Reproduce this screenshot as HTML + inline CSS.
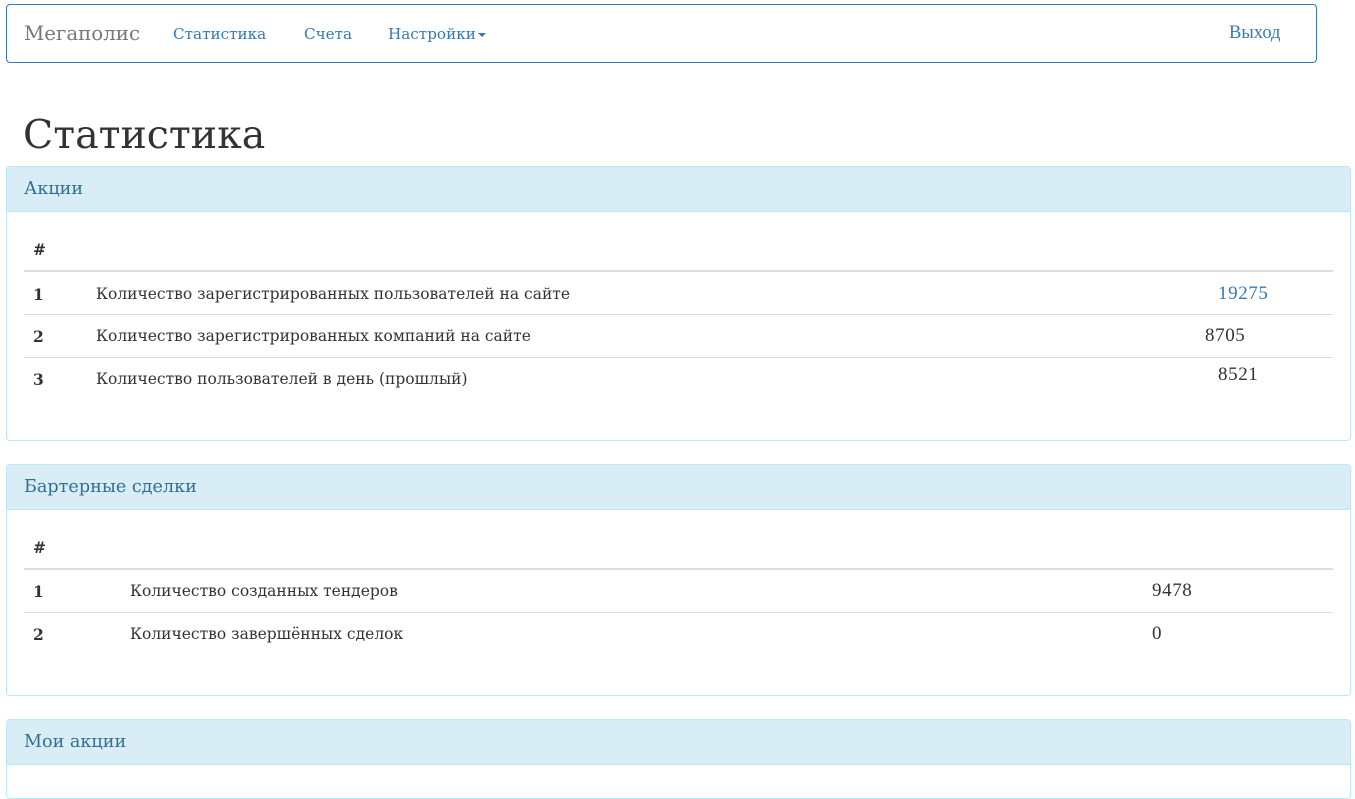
<!DOCTYPE html>
<html><head><meta charset="utf-8"><style>
*{box-sizing:border-box;margin:0;padding:0}
body{width:1355px;height:765px;overflow:hidden;background:#fff;font-family:"DejaVu Serif",serif;color:#333;position:relative}
.a{position:absolute;white-space:nowrap}
.nav{position:absolute;left:6px;top:4px;width:1311px;height:59px;border:1px solid #337ab7;border-radius:4px}
.lk{color:#337ab7;font-size:15.2px}
.panel{position:absolute;left:6px;width:1345px;border:1px solid #bce8f1;border-radius:4px;overflow:hidden}
.ph{height:45px;background:#d9edf7;border-bottom:1px solid #bce8f1;color:#31708f;font-size:17.6px;padding:12px 17px}
.ln{position:absolute;left:24px;width:1309px;height:1px;background:#ddd}
.b{font-weight:bold;font-size:15.5px}
.t{font-size:15.5px}
.n{font-family:"Liberation Serif",serif;font-size:19px;letter-spacing:0.6px}
</style></head><body>
<div class="nav"></div>
<div class="a" style="left:24px;top:22px;color:#777;font-size:19.8px">Мегаполис</div>
<div class="a lk" style="left:173px;top:25px">Статистика</div>
<div class="a lk" style="left:304px;top:25px">Счета</div>
<div class="a lk" style="left:388px;top:25px">Настройки<span style="display:inline-block;width:0;height:0;border-left:4px solid transparent;border-right:4px solid transparent;border-top:4px solid #337ab7;vertical-align:middle;margin-left:2px"></span></div>
<div class="a" style="left:1229px;top:23px;color:#337ab7;font-family:'Liberation Serif',serif;font-size:18.5px">Выход</div>
<div class="a" style="left:23px;top:112px;font-size:39.5px;color:#333">Статистика</div>

<div class="panel" style="top:166px;height:275px"><div class="ph">Акции</div></div>
<div class="a b" style="left:33px;top:240px">#</div>
<div class="ln" style="top:270px;height:2px"></div>
<div class="a b" style="left:33px;top:285px">1</div>
<div class="a t" style="left:96px;top:285px">Количество зарегистрированных пользователей на сайте</div>
<div class="a n" style="left:1218px;top:283px;color:#337ab7">19275</div>
<div class="ln" style="top:314px"></div>
<div class="a b" style="left:33px;top:327px">2</div>
<div class="a t" style="left:96px;top:327px">Количество зарегистрированных компаний на сайте</div>
<div class="a n" style="left:1205px;top:325px">8705</div>
<div class="ln" style="top:357px"></div>
<div class="a b" style="left:33px;top:370px">3</div>
<div class="a t" style="left:96px;top:370px">Количество пользователей в день (прошлый)</div>
<div class="a n" style="left:1218px;top:364px">8521</div>

<div class="panel" style="top:464px;height:232px"><div class="ph" style="height:45px">Бартерные сделки</div></div>
<div class="a b" style="left:33px;top:538px">#</div>
<div class="ln" style="top:568px;height:2px"></div>
<div class="a b" style="left:33px;top:582px">1</div>
<div class="a t" style="left:130px;top:582px">Количество созданных тендеров</div>
<div class="a n" style="left:1152px;top:580px">9478</div>
<div class="ln" style="top:612px"></div>
<div class="a b" style="left:33px;top:625px">2</div>
<div class="a t" style="left:130px;top:625px">Количество завершённых сделок</div>
<div class="a n" style="left:1152px;top:623px">0</div>

<div class="panel" style="top:719px;height:80px"><div class="ph">Мои акции</div></div>
</body></html>
